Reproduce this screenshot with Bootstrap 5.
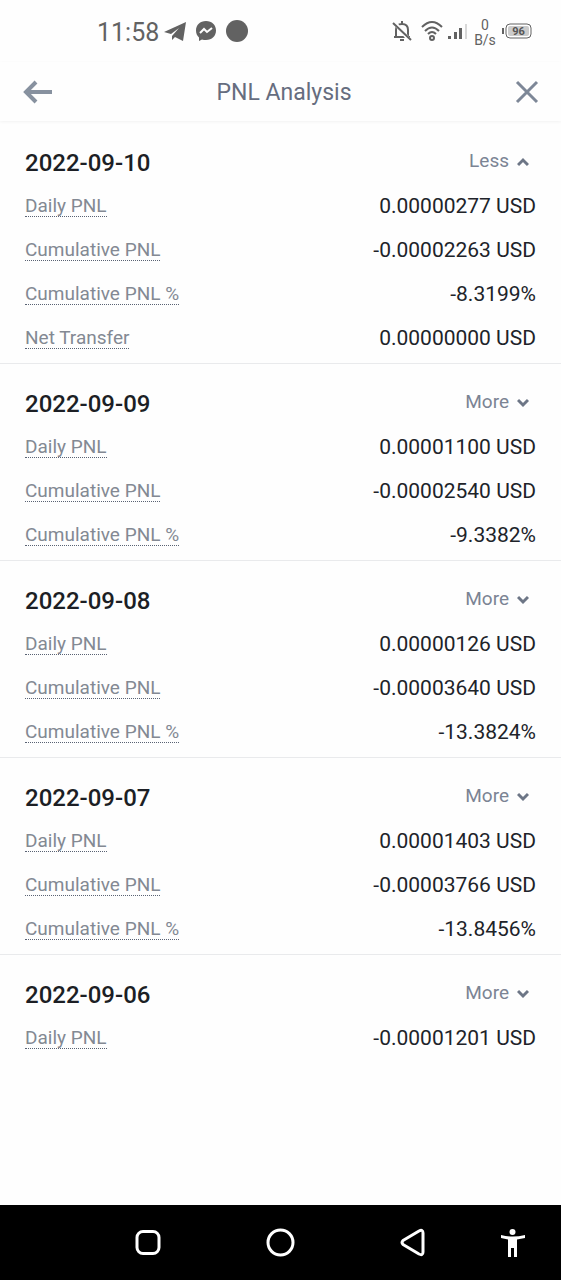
<!DOCTYPE html>
<html lang="en">
<head>
<meta charset="utf-8">
<meta name="viewport" content="width=device-width, initial-scale=1">
<title>PNL Analysis</title>
<link href="https://cdn.jsdelivr.net/npm/bootstrap@5.3.0/dist/css/bootstrap.min.css" rel="stylesheet">
<style>
  body { font-family: Roboto, "Liberation Sans", sans-serif; background: #fefefe; color: #202329; }
  svg { display: block; flex: none; }
  .status { height: 62px; padding: 0 28px 0 97px; color: #626262; }
  .clock { font-size: 25px; line-height: 32px; padding-top: 3px; }
  .speed { font-size: 14px; line-height: 15px; width: 24px; padding-top: 3px; }
  .topbar { height: 59px; padding: 0 21px 0 22px; color: #7d8797; box-shadow: 0 1px 3px rgba(0,0,0,.05); }
  .topbar h1 { font-size: 23px; line-height: 32px; color: #666d7f; padding-top: 3px; }
  .days { padding-top: 2px; }
  .day { padding: 18px 25px 3px; border-bottom: 1px solid #e9eaec; }
  .day:last-child { border-bottom: 0; }
  .day-head { height: 43px; }
  .day-head h2 { font-size: 24px; line-height: 32px; font-weight: 500; color: #1c1f25; }
  .toggle { font-size: 19px; line-height: 24px; color: #7b8494; margin: 0 7px 4px 0; }
  .entry { height: 44px; }
  .entry dt { font-size: 19px; line-height: 21px; font-weight: 400; color: #838993; border-bottom: 1px dotted #596273; }
  .entry dd { font-size: 21px; line-height: 28px; }
  .sysnav { height: 75px; background: #000; color: #fff; }
</style>
</head>
<body class="min-vh-100 d-flex flex-column">
<div class="status d-flex align-items-center justify-content-between">
  <div class="d-flex align-items-center">
    <span class="clock me-1">11:58</span>
    <svg width="24" height="24" viewBox="0 0 24 24" fill="currentColor" class="me-2"><path d="M1 13 23 3 20 22 12 18 9 21 9 17 16 9 8 15Z"/></svg>
    <svg width="22" height="22" viewBox="0 0 22 22" class="me-2"><path fill="currentColor" d="M11 1C5 1 1 5 1 10.500c0 3 1 5 3 7V21l3-1.500c1 .5 3 .5 4 .5 6 0 10-4 10-9.500S17 1 11 1Z"/><path fill="none" stroke="#fefefe" stroke-width="2" d="m5 13 4-4 3 3 5-4"/></svg>
    <svg width="24" height="24" viewBox="0 0 24 24"><circle cx="12" cy="12" r="11" fill="currentColor"/></svg>
  </div>
  <div class="d-flex align-items-center">
    <svg width="22" height="24" viewBox="0 0 22 24" fill="none" stroke="currentColor" stroke-width="2" class="me-2"><path d="M3 18h16M5 17v-6c0-4 2-6 6-6s6 2 6 6v6M11 2v3M9 21h4"/><path d="M3 3 20 23" stroke="#fefefe" stroke-width="4"/><path d="M2 4 20 21"/></svg>
    <svg width="22" height="22" viewBox="0 0 22 22" fill="none" stroke="currentColor" stroke-width="2" class="me-1"><path d="M1 7Q11-3 21 7M4 11q7-7 14 0M7 14q4-4 8 0"/><circle cx="11" cy="18" r="2"/></svg>
    <svg width="22" height="20" viewBox="0 0 22 20" fill="currentColor" class="me-1"><path d="M1 15h3v3H1zM7 11h3v7H7zM12 7h3v11h-3z"/><path fill="#d8d8d8" d="M18 3h2v15h-2z"/></svg>
    <span class="speed text-center me-1">0<br>B/s</span>
    <svg width="32" height="18" viewBox="0 0 32 18"><path fill="currentColor" d="M1 6h2v6H1z"/><rect x="5" y="2" width="25" height="14" rx="4" fill="#fff" stroke="currentColor"/><rect x="7" y="4" width="21" height="10" rx="2" fill="#ccc"/><text x="17.500" y="13" text-anchor="middle" font-size="11" font-weight="700" fill="#555">96</text></svg>
  </div>
</div>
<header class="topbar d-flex align-items-center justify-content-between">
  <button type="button" class="btn p-0 border-0 text-reset" aria-label="Back"><svg width="32" height="24" viewBox="0 0 32 24" fill="none" stroke="#87919f" stroke-width="4"><path d="M30 12H5M14 2 4 12l10 10"/></svg></button>
  <h1 class="m-0 fw-normal">PNL Analysis</h1>
  <button type="button" class="btn p-0 border-0 text-reset" aria-label="Close"><svg width="26" height="24" viewBox="0 0 26 24" fill="none" stroke="currentColor" stroke-width="3"><path d="m3 2 20 20M23 2 3 22"/></svg></button>
</header>
<main class="days flex-grow-1" id="days"></main>
<nav class="sysnav" aria-label="System">
  <svg class="w-100" height="75" viewBox="0 0 561 75" fill="none" stroke="currentColor" stroke-width="3"><rect x="137" y="26.500" width="22" height="22" rx="6"/><circle cx="280.500" cy="37.500" r="12.500"/><path stroke-linejoin="round" d="M403 35.500 419 26q4-2 4 2v19q0 4-4 2l-16-9.500q-2-2 0-4Z"/><g fill="currentColor" stroke="none"><circle cx="512.500" cy="27" r="3"/><path d="M501 30q11.500 3 24 0v3l-8 1.500V52h-3v-9h-3v9h-3V34.500L501 33Z"/></g></svg>
</nav>
<script>
  const days = [
    ['2022-09-10', ['0.00000277 USD', '-0.00002263 USD', '-8.3199%', '0.00000000 USD'], true],
    ['2022-09-09', ['0.00001100 USD', '-0.00002540 USD', '-9.3382%']],
    ['2022-09-08', ['0.00000126 USD', '-0.00003640 USD', '-13.3824%']],
    ['2022-09-07', ['0.00001403 USD', '-0.00003766 USD', '-13.8456%']],
    ['2022-09-06', ['-0.00001201 USD']]
  ];
  const labels = ['Daily PNL', 'Cumulative PNL', 'Cumulative PNL %', 'Net Transfer'];
  document.getElementById('days').innerHTML = days.map(([date, values, open]) => `
    <section class="day">
      <div class="day-head d-flex align-items-center justify-content-between">
        <h2 class="m-0">${date}</h2>
        <button type="button" class="toggle btn p-0 border-0 d-flex align-items-center gap-2" aria-expanded="${!!open}">${open ? 'Less' : 'More'}
          <svg width="12" height="12" viewBox="0 0 12 12" fill="none" stroke="#6d7686" stroke-width="3"><path d="${open ? 'm1 10 5-5 5 5' : 'm1 4 5 5 5-5'}"/></svg>
        </button>
      </div>
      <dl class="m-0">${values.map((v, i) => `
        <div class="entry d-flex align-items-center justify-content-between"><dt>${labels[i]}</dt><dd class="m-0">${v}</dd></div>`).join('')}
      </dl>
    </section>`).join('');
</script>
<script src="https://cdn.jsdelivr.net/npm/bootstrap@5.3.0/dist/js/bootstrap.bundle.min.js"></script>
</body>
</html>
